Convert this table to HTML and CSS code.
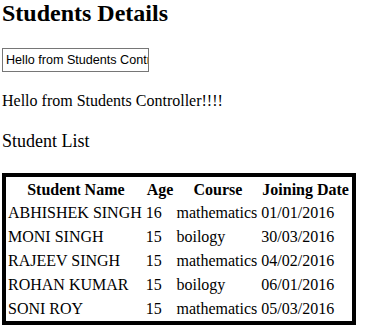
FILE: index.html
```html
<!DOCTYPE html>
<html lang="en">
<head>
    <meta charset="UTF-8">
    <title>Students Details</title>
    <link rel="stylesheet" href="styles.css">
</head>
<body>
    <h1>Students Details</h1>

    <input type="text" id="message" class="message-input" value="Hello from Students Controller!!!!" />

    <p id="message-text" class="message">Hello from Students Controller!!!!</p>

    <h3 class="list-title">Student List</h3>

    <table class="student-table">
        <thead>
            <tr>
                <th>Student Name</th>
                <th>Age</th>
                <th>Course</th>
                <th>Joining Date</th>
            </tr>
        </thead>
        <tbody id="student-rows"></tbody>
    </table>

    <script>
        const students = [
            { name: 'ABHISHEK SINGH', age: 16, course: 'mathematics', joined: '01/01/2016' },
            { name: 'MONI SINGH', age: 15, course: 'boilogy', joined: '30/03/2016' },
            { name: 'RAJEEV SINGH', age: 15, course: 'mathematics', joined: '04/02/2016' },
            { name: 'ROHAN KUMAR', age: 15, course: 'boilogy', joined: '06/01/2016' },
            { name: 'SONI ROY', age: 15, course: 'mathematics', joined: '05/03/2016' }
        ];

        document.getElementById('student-rows').innerHTML = students.map(s => `
            <tr>
                <td>${s.name}</td>
                <td>${s.age}</td>
                <td>${s.course}</td>
                <td>${s.joined}</td>
            </tr>
        `).join('');

        // Keep the paragraph in sync with the input
        document.getElementById('message').addEventListener('input', function(e) {
            document.getElementById('message-text').textContent = e.target.value;
        });
    </script>
</body>
</html>
```

FILE: styles.css
```css
body {
    margin: 0 2px;
    font-family: 'Liberation Serif', 'Times New Roman', serif;
    font-size: 16px;
    color: #000;
    background: #fff;
}

h1 {
    font-size: 24px;
    font-weight: bold;
    margin: 0 0 21px;
}

.message-input {
    display: block;
    width: 147px;
    height: 24px;
    box-sizing: border-box;
    margin: 0;
    padding: 1px 0 1px 3px;
    border: 1px solid #767676;
    font-family: 'Liberation Sans', Arial, sans-serif;
    font-size: 12.6px;
    color: #000;
}

.message {
    margin: 20px 0;
}

.list-title {
    font-size: 18px;
    font-weight: normal;
    margin: 21px 0;
}

.student-table {
    border: 4px solid #000;
    border-spacing: 2px;
}

.student-table th,
.student-table td {
    line-height: 18px;
    text-align: left;
}

.student-table th {
    padding: 1.5px 1px 0;
    text-align: center;
}

.student-table td {
    padding: 3px 2px 1px 0;
}
```
